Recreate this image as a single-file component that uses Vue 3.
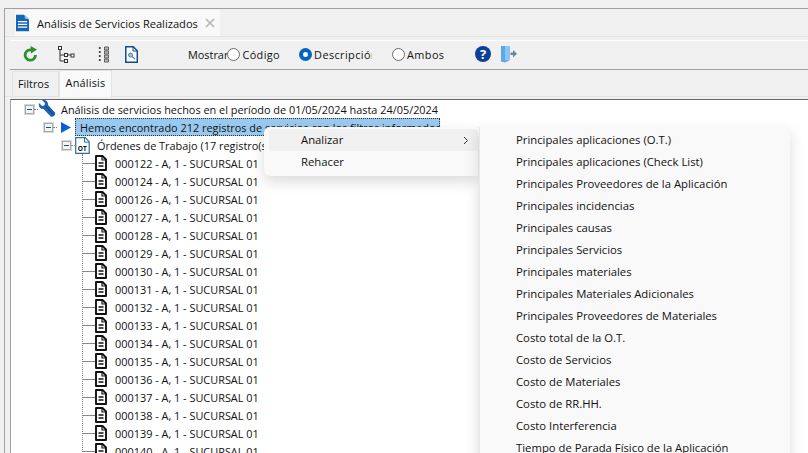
<template>
  <div class="window">
    <div class="frame">
      <div class="doc-tabs">
        <div class="doc-tab">
          <svg width="13" height="18" viewBox="0 0 14 18" class="doc-icon">
            <path d="M0 0h8.500L14 5.500V18H0z" fill="#1565b5" />
            <path d="M9.500 0L14 4.500H9.500z" fill="#9cc4ea" />
            <path d="M2 7.500h10M2 10.500h10M2 13.500h10" stroke="#fff" stroke-width="1.400" />
          </svg>
          <span>Análisis de Servicios Realizados</span>
          <svg width="10" height="10" viewBox="0 0 10 10" class="close-icon">
            <path d="M1 1l8 8M9 1l-8 8" stroke="#b5b5b5" stroke-width="1.600" />
          </svg>
        </div>
      </div>

      <div class="toolbar">
        <svg class="tool refresh" width="15" height="16" viewBox="0 0 15 16">
          <path d="M12.500 9a5.200 5.200 0 1 1-3-4.700" fill="none" stroke="#2f8f2f" stroke-width="2.800" />
          <path d="M7.500 0l6.500 3.500L8 7.500z" fill="#2f8f2f" />
        </svg>
        <svg class="tool tree-tool" width="17" height="17" viewBox="0 0 17 17">
          <g fill="#fff" stroke="#333">
            <rect x="0.500" y="0.500" width="3" height="3" />
            <rect x="6.500" y="7.500" width="3" height="3" />
            <rect x="13" y="8" width="3" height="3" />
            <rect x="6.500" y="13.500" width="3" height="3" />
          </g>
          <path d="M2 4v11h4M2 9h4M10 9h3" fill="none" stroke="#333" />
        </svg>
        <svg class="tool list-tool" width="12" height="17" viewBox="0 0 12 17">
          <g fill="#333">
            <circle cx="1.800" cy="2" r="1.100" /><circle cx="1.800" cy="6" r="1.100" />
            <circle cx="1.800" cy="10" r="1.100" /><circle cx="1.800" cy="14" r="1.100" />
          </g>
          <path d="M6.500 1h4v3h-4zM6.500 5h4v3h-4zM6.500 9h4v3h-4zM6.500 13h4v3h-4z" fill="#bbb" stroke="#444" stroke-width="0.800" />
        </svg>
        <svg class="tool search-doc" width="13" height="17" viewBox="0 0 13 17">
          <path d="M.8.800h7.500l4 4v11.400H.8z" fill="#fff" stroke="#0f4c8a" stroke-width="1.500" />
          <path d="M8 .800v4.200h4.500" fill="none" stroke="#0f4c8a" />
          <circle cx="5.500" cy="9" r="2" fill="#9cc4ea" stroke="#4a7fae" />
          <path d="M7 10.500l3 2.500" stroke="#777" stroke-width="1.300" />
        </svg>

        <span class="show-label">Mostrar</span>
        <label class="radio first"><i class="dot"></i>Código</label>
        <label class="radio second"><i class="dot checked"></i>Descripción</label>
        <label class="radio third"><i class="dot"></i>Ambos</label>

        <svg class="tool help" width="16" height="16" viewBox="0 0 16 16">
          <circle cx="8" cy="8" r="8" fill="#0e3f96" />
          <text x="8" y="12.500" text-anchor="middle" class="help-mark">?</text>
        </svg>
        <svg class="tool exit" width="16" height="18" viewBox="0 0 16 18">
          <path d="M0 1h9v14l-5 2.500-4-1z" fill="#5aa9ea" />
          <path d="M4 1h5v14H4z" fill="#8cc5f2" />
          <path d="M9.500 7.500h2.500V5l4 3.800-4 3.700v-2.500H9.500z" fill="#6f8794" />
        </svg>
      </div>

      <div class="view-tabs">
        <div class="view-tab">Filtros</div>
        <div class="view-tab active">Análisis</div>
      </div>

      <div class="tree">
        <div class="row root">
          <i class="expander"></i>
          <svg width="18" height="18" viewBox="0 0 18 18" class="wrench">
            <path d="M1 3l3 3 2.500-.5L7 3 4 0c3-.8 6.500 1.200 6 5l7 7.500c1 2.500-1.700 5-4.300 4L5.500 9C2.500 9.500.2 6.500 1 3z" fill="#1c62b0" />
            <path d="M7 5.500l8.500 9" stroke="#0d3f7c" stroke-width="1" />
          </svg>
          <span class="label">Análisis de servicios hechos en el período de 01/05/2024 hasta 24/05/2024</span>
        </div>
        <div class="row level-1">
          <i class="expander"></i>
          <svg width="10" height="11" viewBox="0 0 10 11" class="play"><path d="M0 0l10 5.500L0 11z" fill="#0a5fd8" /></svg>
          <span class="label selected">Hemos encontrado 212 registros de servicios con los filtros informados</span>
        </div>
        <div class="row level-2">
          <i class="expander"></i>
          <svg width="15" height="17" viewBox="0 0 15 17" class="ot">
            <path d="M.7.700h9.500l4 4v11.600H.7z" fill="#fff" stroke="#2e6ea8" stroke-width="1.200" />
            <path d="M9.500.700v4.500h4.500" fill="none" stroke="#2e6ea8" />
            <text x="7.200" y="14" text-anchor="middle" class="ot-mark">OT</text>
          </svg>
          <span class="label">Órdenes de Trabajo (17 registro(s))</span>
        </div>
        <div class="orders">
          <div v-for="code in orders" :key="code" class="row order">
            <svg width="12" height="16" viewBox="0 0 12 16" class="page">
              <path d="M1 1h6.500L11 4.500V15H1z" fill="#fff" stroke="#111" stroke-width="1.900" stroke-linejoin="round" />
              <path d="M7 1v4h4" fill="none" stroke="#111" stroke-width="1.200" />
              <path d="M3.500 8h5M3.500 11h5" stroke="#111" stroke-width="1.300" />
            </svg>
            <span class="label">{{ code }} - A, 1 - SUCURSAL 01</span>
          </div>
        </div>
      </div>
    </div>

    <div class="menu context">
      <div class="menu-item hover">Analizar
        <svg width="6" height="9" viewBox="0 0 6 9" class="chevron"><path d="M1 1l3.500 3.500L1 8" fill="none" stroke="#333" /></svg>
      </div>
      <div class="menu-item">Rehacer</div>
    </div>
    <div class="menu submenu">
      <div v-for="item in analyses" :key="item" class="sub-item">{{ item }}</div>
    </div>
  </div>
</template>

<script setup>
const orders = [
  "000122", "000124", "000126", "000127", "000128", "000129", "000130", "000131", "000132",
  "000133", "000134", "000135", "000136", "000137", "000138", "000139", "000140",
];

const analyses = [
  "Principales aplicaciones (O.T.)",
  "Principales aplicaciones (Check List)",
  "Principales Proveedores de la Aplicación",
  "Principales incidencias",
  "Principales causas",
  "Principales Servicios",
  "Principales materiales",
  "Principales Materiales Adicionales",
  "Principales Proveedores de Materiales",
  "Costo total de la O.T.",
  "Costo de Servicios",
  "Costo de Materiales",
  "Costo de RR.HH.",
  "Costo Interferencia",
  "Tiempo de Parada Físico de la Aplicación",
];
</script>

<style>
html,
body {
  margin: 0;
  overflow: hidden;
}
</style>

<style scoped>
.window {
  position: relative;
  width: 808px;
  height: 453px;
  overflow: hidden;
  padding-top: 8px;
  box-sizing: border-box;
  background: #f0f0f0;
  font-family: "Open Sans", "Noto Sans", sans-serif;
  font-size: 10.900px;
  color: #111;
}
.frame {
  height: 445px;
  margin-left: 4px;
  border-top: 1px solid #a0a0a0;
  border-left: 1px solid #a0a0a0;
  box-sizing: border-box;
}
.doc-tabs {
  height: 26px;
  padding-left: 10px;
  padding-top: 1px;
  border-bottom: 1px solid #e4e4e4;
}
.doc-tab {
  display: flex;
  align-items: center;
  width: 205px;
  height: 26px;
  background: #f9f9f9;
  white-space: nowrap;
  font-size: 11.100px;
}
.doc-icon {
  flex: none;
  margin: 0 8px 0 1px;
}
.close-icon {
  flex: none;
  margin-left: 7px;
}
.toolbar {
  display: flex;
  align-items: center;
  height: 26px;
  margin: 3px 0 0 5px;
  border-top: 1px solid #fff;
  border-bottom: 1px solid #a0a0a0;
  padding-bottom: 2px;
}
.tool {
  flex: none;
}
.refresh {
  margin-left: 13px;
}
.tree-tool {
  margin-left: 20px;
}
.list-tool {
  margin-left: 23px;
}
.search-doc {
  margin-left: 15px;
}
.show-label {
  margin-left: 50px;
}
.radio {
  display: flex;
  align-items: center;
  letter-spacing: 0.400px;
}
.dot {
  flex: none;
  width: 13px;
  height: 13px;
  margin-right: 2px;
  border: 1px solid #6e6e6e;
  border-radius: 50%;
  box-sizing: border-box;
  background: #fff;
}
.dot.checked {
  border: 4px solid #0067c0;
}
.first {
  margin-left: -1px;
}
.second {
  margin-left: 19px;
  width: 73px;
  overflow: hidden;
  white-space: nowrap;
}
.third {
  margin-left: 20px;
}
.help {
  margin-left: 31px;
}
.help-mark {
  font: bold 13px "Open Sans", sans-serif;
  fill: #fff;
}
.exit {
  margin-left: 10px;
}
.view-tabs {
  display: flex;
  align-items: flex-end;
  height: 26px;
  padding-left: 7px;
  border-bottom: 1px solid #e4e4e4;
}
.view-tab {
  width: 47px;
  height: 25px;
  line-height: 23px;
  padding-right: 4px;
  text-align: center;
  border: 1px solid #e3e3e3;
  border-bottom: none;
  box-sizing: border-box;
}
.view-tab.active {
  width: 53px;
  height: 27px;
  line-height: 23px;
  padding-right: 0;
  margin-bottom: -1px;
  letter-spacing: 0.200px;
  background: #f9f9f9;
}
.tree {
  height: 360px;
  margin: 2px 0 0 5px;
  border: 1px solid #a0a0a0;
  border-top-color: #666;
  border-right: none;
  background: #fff;
}
.row {
  display: flex;
  align-items: center;
  height: 18px;
  white-space: nowrap;
}
.expander {
  position: relative;
  flex: none;
  width: 7px;
  height: 7px;
  border: 1px solid #a8a8a8;
  outline: 1px solid #d8d8d8;
  background: #f4f4f4;
}
.expander::before {
  content: "";
  position: absolute;
  left: 8px;
  top: 3px;
  width: 4px;
  border-top: 1px dotted #888;
}
.expander::after {
  content: "";
  position: absolute;
  left: 1px;
  top: 3px;
  width: 5px;
  height: 1px;
  background: #1c4f8f;
}
.root {
  padding-left: 14px;
}
.wrench {
  flex: none;
  margin: 0 5px 0 4px;
}
.level-1 {
  padding-left: 33px;
}
.play {
  flex: none;
  margin: 0 4px 0 8px;
}
.selected {
  height: 18px;
  line-height: 20px;
  width: 365px;
  padding-left: 5px;
  box-sizing: border-box;
  outline: 1px dotted #333;
  outline-offset: -1px;
  background: #99c9ef;
}
.level-2 {
  padding-left: 51px;
}
.ot {
  flex: none;
  margin: 0 7px 0 4px;
}
.ot-mark {
  font: bold 6.500px "Open Sans", sans-serif;
  fill: #111;
}
.orders {
  margin-left: 71px;
  border-left: 1px dotted #888;
}
.order {
  padding-left: 12px;
  background: linear-gradient(#888, #888) 0 9px / 12px 1px no-repeat;
}
.page {
  flex: none;
  margin-right: 8px;
  background: #fff;
}
.menu {
  position: absolute;
  top: 127px;
  background: #f9f9f9;
  box-shadow: 0 6px 14px rgba(0, 0, 0, 0.14);
  font-size: 11.300px;
}
.context {
  left: 264px;
  width: 214px;
  height: 49px;
  padding: 2px 0 0 5px;
  box-sizing: border-box;
  border-radius: 6px 0 0 6px;
}
.menu-item {
  position: relative;
  height: 22px;
  line-height: 22px;
  padding-left: 32px;
  border-radius: 4px;
}
.menu-item.hover {
  background: #f0f0f0;
}
.chevron {
  position: absolute;
  right: 9px;
  top: 7px;
}
.submenu {
  left: 479px;
  width: 311px;
  height: 340px;
  padding: 2px 0 0 36px;
  box-sizing: border-box;
  border-left: 1px solid #e8e8e8;
}
.sub-item {
  height: 22px;
  line-height: 22px;
}
</style>
